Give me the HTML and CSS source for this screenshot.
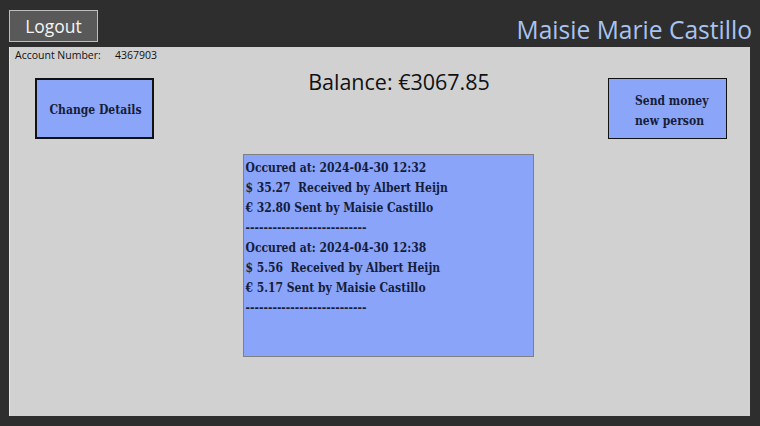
FILE: index.html
```html
<!DOCTYPE html>
<html>
<head>
<meta charset="utf-8">
<link rel="stylesheet" href="styles.css">
</head>
<body>
<div class="app">
  <header class="top">
    <button class="logout">Logout</button>
    <div class="name">Maisie Marie Castillo</div>
  </header>
  <main class="panel">
    <div class="account"><span class="acc-label">Account Number:</span><span class="acc-num">4367903</span></div>
    <div class="row">
      <button class="btn change">Change Details</button>
      <div class="balance">Balance: €3067.85</div>
      <button class="btn send">Send money<br>new person</button>
    </div>
    <div class="history">
      <div>Occured at: 2024-04-30 12:32</div>
      <div>$ 35.27&nbsp; Received by Albert Heijn</div>
      <div>€ 32.80 Sent by Maisie Castillo</div>
      <div>---------------------------</div>
      <div>Occured at: 2024-04-30 12:38</div>
      <div>$ 5.56&nbsp; Received by Albert Heijn</div>
      <div>€ 5.17 Sent by Maisie Castillo</div>
      <div>---------------------------</div>
    </div>
  </main>
</div>
</body>
</html>
```

FILE: styles.css
```css
html, body {
  margin: 0;
  padding: 0;
  background: #2e2e2e;
}
.app {
  width: 760px;
  height: 426px;
  padding: 10px 9px 0 9px;
  box-sizing: border-box;
  display: flex;
  flex-direction: column;
  font-family: "Open Sans", "Noto Sans", sans-serif;
}
.top {
  height: 37px;
  display: flex;
  justify-content: space-between;
  align-items: flex-start;
}
.logout {
  width: 89px;
  height: 32px;
  background: #595959;
  border: 1px solid #bdbdbd;
  color: #f4f4f4;
  font-family: "Open Sans", "Noto Sans", sans-serif;
  font-size: 17.5px;
  padding: 0;
  line-height: 30px;
  margin: 0;
}
.name {
  color: #a9c3ee;
  font-size: 24.6px;
  line-height: 32px;
  margin-top: 4px;
  margin-right: -1px;
}
.panel {
  width: 741px;
  height: 369px;
  background: #d1d1d1;
  border-left: 1px solid #e6e6e6;
  box-sizing: border-box;
  display: flex;
  flex-direction: column;
  align-items: center;
}
.account {
  align-self: flex-start;
  font-size: 10.5px;
  line-height: 14px;
  color: #111;
  padding: 1px 0 0 5px;
  display: flex;
}
.acc-label { width: 100px; }
.row {
  width: 100%;
  display: flex;
  align-items: flex-start;
  justify-content: space-between;
  box-sizing: border-box;
  padding: 0 23px 0 25px;
  margin-top: 16px;
  height: 76px;
}
.btn {
  background: #8ba5f8;
  color: #161d3a;
  font-family: "DejaVu Serif", "Liberation Serif", serif;
  font-stretch: condensed;
  font-weight: bold;
  font-size: 12px;
  margin: 0;
  padding: 0;
}
.change {
  width: 119px;
  height: 61px;
  border: 2px solid #111;
  padding-top: 2px;
  padding-left: 2px;
}
.send {
  width: 119px;
  height: 61px;
  border: 1px solid #111;
  text-align: left;
  padding-left: 26px;
  padding-top: 4px;
  line-height: 20px;
}
.balance {
  font-size: 21.5px;
  color: #111;
  line-height: 28px;
  margin-top: -10px;
  margin-left: 36px;
}
.history {
  width: 291px;
  height: 203px;
  box-sizing: border-box;
  background: #89a4f8;
  border: 1px solid #808080;
  padding: 3px 2px;
  font-family: "DejaVu Serif", "Liberation Serif", serif;
  font-stretch: condensed;
  font-weight: bold;
  font-size: 12px;
  line-height: 20px;
  color: #161d3a;
  margin-left: 16px;
}
```
